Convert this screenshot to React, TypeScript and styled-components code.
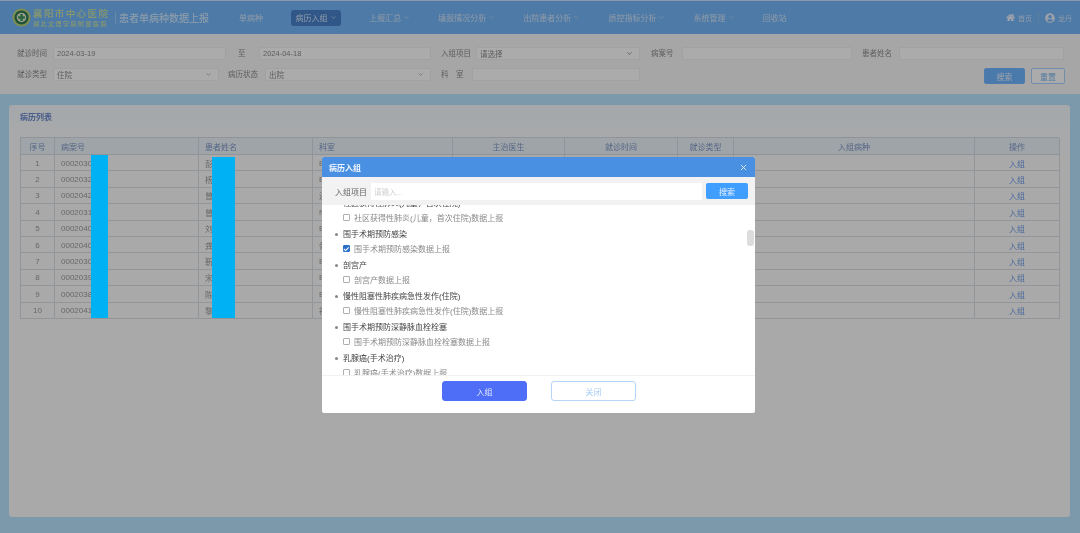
import styled, { createGlobalStyle } from "styled-components";
import { ChevronDown, X } from "lucide-react";
import { FaHome, FaUserCircle } from "react-icons/fa";

const GlobalStyle = createGlobalStyle`
  html, body {
    margin: 0;
    padding: 0;
    height: 533px;
    overflow: hidden;
    background: #bde6ff;
  }
  * {
    box-sizing: border-box;
  }
  body {
    font-family: "Liberation Sans", "Noto Sans CJK SC", sans-serif;
    font-size: 8px;
  }
`;

const Page = styled.div`
  position: relative;
  display: flex;
  flex-direction: column;
  width: 1080px;
  height: 533px;
  background: #b8e4ff;
  filter: blur(0.7px);
`;

const Header = styled.header`
  display: flex;
  align-items: center;
  flex: none;
  height: 34px;
  padding: 0 8px 0 12px;
  background: #74b6fa;
  border-top: 1px solid #cfe6ff;
`;

const LogoText = styled.div`
  display: flex;
  flex-direction: column;
  gap: 2px;
  width: 82px;
  margin-left: 2px;
  color: #cde4a0;
  font-family: "Noto Sans CJK SC", sans-serif;
  font-weight: 500;
  white-space: nowrap;
`;

const LogoTop = styled.span`
  font-size: 9.5px;
  line-height: 10px;
  letter-spacing: 1.4px;
`;

const LogoBottom = styled.span`
  font-size: 6px;
  line-height: 7px;
  letter-spacing: 1.5px;
`;

const Title = styled.div`
  margin-right: 30px;
  padding-left: 3px;
  border-left: 1px solid #9ccbf5;
  color: #dbeeff;
  font-family: "Noto Sans CJK SC", sans-serif;
  font-size: 10px;
  line-height: 12px;
  white-space: nowrap;
`;

const Nav = styled.nav`
  display: flex;
  align-items: center;
  flex: 1;
  gap: 28.1px;
`;

const NavItem = styled.div<{ $active?: boolean }>`
  display: flex;
  align-items: center;
  justify-content: center;
  gap: 2px;
  height: 16px;
  padding: 0 ${(p) => (p.$active ? 4.5 : 0)}px;
  border-radius: 3px;
  background: ${(p) => (p.$active ? "#4a82cc" : "transparent")};
  color: #d4e6fb;
  font-size: 8px;
  white-space: nowrap;
`;

const HeaderRight = styled.div`
  display: flex;
  align-items: center;
  gap: 3px;
  color: #cfe3fa;
  font-size: 7px;
`;

const Divider = styled.span`
  width: 1px;
  height: 11px;
  margin: 0 3px;
  background: #8fbdea;
`;

const FilterPanel = styled.section`
  display: flex;
  flex: none;
  flex-direction: column;
  gap: 8px;
  height: 60px;
  padding: 13px 15px 0 17px;
  background: #f8f8f8;
`;

const FilterRow = styled.div`
  display: flex;
  align-items: flex-start;
  height: 13px;
`;

const Label = styled.span<{ $width: number; $gap?: number }>`
  flex: none;
  width: ${(p) => p.$width}px;
  margin-left: ${(p) => p.$gap ?? 0}px;
  color: #8c8c8c;
  font-size: 7.5px;
  line-height: 13px;
  white-space: nowrap;
`;

const Field = styled.div<{ $width: number }>`
  display: flex;
  flex: none;
  align-items: center;
  justify-content: space-between;
  width: ${(p) => p.$width}px;
  height: 13px;
  padding: 0 6px 0 3px;
  border: 1px solid #f0f0f0;
  border-radius: 2px;
  background: #fff;
  color: #8c8c8c;
  font-size: 7.5px;
`;

const ButtonGroup = styled.div`
  display: flex;
  gap: 6px;
  margin-left: auto;
`;

const FilterButton = styled.div<{ $primary?: boolean }>`
  display: flex;
  align-items: center;
  justify-content: center;
  width: ${(p) => (p.$primary ? 41 : 34)}px;
  height: 16px;
  border-radius: 2px;
  border: 1px solid ${(p) => (p.$primary ? "#73b8ff" : "#a9d3ff")};
  background: ${(p) => (p.$primary ? "#6fb6ff" : "#fff")};
  color: ${(p) => (p.$primary ? "#e8f3ff" : "#7fb8f0")};
  font-size: 8px;
`;

const Content = styled.main`
  flex: 1;
  padding: 11px 10px 16px 9px;
`;

const Card = styled.section`
  height: 100%;
  padding: 7px 11px 0;
  border-radius: 3px;
  background: linear-gradient(#f6fbff 0, #fcfdfe 50px, #fdfdfd 100%);
`;

const CardTitle = styled.h2`
  margin: 0 0 13px;
  color: #6a88cc;
  font-size: 8px;
  font-weight: 700;
  line-height: 12px;
`;

const Table = styled.div`
  display: grid;
  grid-template-columns: 34px 144px 114px 140px 112px 113px 56px 241px 85px;
  width: 1039px;
  border-top: 1px solid #d5dde8;
  border-left: 1px solid #d5dde8;
`;

const HeadCell = styled.div<{ $left?: boolean }>`
  display: flex;
  align-items: center;
  justify-content: ${(p) => (p.$left ? "flex-start" : "center")};
  height: 17px;
  padding-left: ${(p) => (p.$left ? 6 : 0)}px;
  border-right: 1px solid #d5dde8;
  border-bottom: 1px solid #d5dde8;
  background: #eef5fb;
  color: #7d97c8;
  font-size: 8px;
`;

const Cell = styled.div<{ $left?: boolean; $link?: boolean }>`
  display: flex;
  align-items: center;
  justify-content: ${(p) => (p.$left ? "flex-start" : "center")};
  height: 16.4px;
  padding-top: 1px;
  padding-left: ${(p) => (p.$left ? 6 : 0)}px;
  border-right: 1px solid #dadfe6;
  border-bottom: 1px solid #dadfe6;
  color: ${(p) => (p.$link ? "#6f9be8" : "#9a9a9a")};
  font-size: 8px;
`;

const Backdrop = styled.div`
  position: absolute;
  inset: 0;
  z-index: 10;
  background: rgba(0, 0, 0, 0.33);
`;

const Redaction = styled.div<{ $left: number; $top: number; $width: number; $height: number }>`
  position: absolute;
  z-index: 11;
  left: ${(p) => p.$left}px;
  top: ${(p) => p.$top}px;
  width: ${(p) => p.$width}px;
  height: ${(p) => p.$height}px;
  background: #00b2f4;
`;

const Modal = styled.div`
  position: absolute;
  z-index: 20;
  left: 322px;
  top: 157px;
  display: flex;
  flex-direction: column;
  width: 433px;
  height: 256px;
  border-radius: 2px;
  overflow: hidden;
  background: #fff;
`;

const ModalHeader = styled.div`
  display: flex;
  align-items: center;
  justify-content: space-between;
  flex: none;
  height: 20px;
  padding: 0 7px;
  background: #4a90e2;
  color: #f2f7fd;
  font-size: 8px;
  font-weight: 700;
`;

const SearchBar = styled.div`
  display: flex;
  align-items: center;
  flex: none;
  height: 28px;
  padding: 0 7px 0 13px;
  background: #f2f2f2;
`;

const SearchLabel = styled.span`
  width: 36px;
  color: #666;
  font-size: 8px;
  white-space: nowrap;
`;

const SearchInput = styled.div`
  display: flex;
  align-items: center;
  flex: 1;
  height: 17px;
  padding-left: 3px;
  background: #fff;
  color: #d0d0d0;
  font-size: 7.5px;
`;

const SearchButton = styled.div`
  display: flex;
  align-items: center;
  justify-content: center;
  width: 42px;
  height: 16px;
  margin-left: 4px;
  border-radius: 2px;
  background: #409eff;
  color: #e6f2ff;
  font-size: 8px;
`;

const ListArea = styled.div`
  position: relative;
  flex: none;
  height: 171px;
  overflow: hidden;
  border-bottom: 1px solid #f1f1f1;
`;

const List = styled.ul`
  margin: -9px 0 0;
  padding: 0 0 0 13px;
  list-style: none;
`;

const Section = styled.li`
  display: flex;
  flex-direction: column;
`;

const SectionTitle = styled.div`
  position: relative;
  height: 15.5px;
  padding-left: 8px;
  color: #444;
  font-size: 8px;
  line-height: 15.5px;

  &::before {
    content: "";
    position: absolute;
    left: 0;
    top: 6px;
    width: 3px;
    height: 3px;
    border-radius: 50%;
    background: #888;
  }
`;

const Item = styled.label`
  display: flex;
  align-items: center;
  gap: 4px;
  height: 15.5px;
  padding: 0 0 3px 8px;
  color: #8a8a8a;
  font-size: 8px;
`;

const Checkbox = styled.input`
  position: relative;
  flex: none;
  width: 7px;
  height: 7px;
  margin: 0;
  appearance: none;
  border: 1px solid #b0b0b0;
  border-radius: 1px;
  background: #fff;

  &:checked {
    border-color: #2a6fc9;
    background: #2a6fc9;
  }

  &:checked::after {
    content: "";
    position: absolute;
    left: 1.2px;
    top: 0;
    width: 2px;
    height: 3.6px;
    border: solid #fff;
    border-width: 0 1px 1px 0;
    transform: rotate(45deg);
  }
`;

const ScrollThumb = styled.div`
  position: absolute;
  top: 25px;
  right: 1px;
  width: 7px;
  height: 16px;
  border-radius: 3px;
  background: #dcdcdc;
`;

const ModalFooter = styled.div`
  display: flex;
  align-items: flex-start;
  justify-content: center;
  gap: 24px;
  padding: 5px 0 0 1px;
`;

const ModalButton = styled.div<{ $primary?: boolean }>`
  display: flex;
  align-items: center;
  justify-content: center;
  width: 85px;
  height: 20px;
  border-radius: 3px;
  border: 1px solid ${(p) => (p.$primary ? "#4f6ef7" : "#b5d5f8")};
  background: ${(p) => (p.$primary ? "#4f6ef7" : "#fff")};
  color: ${(p) => (p.$primary ? "#e4e9ff" : "#a5cbf5")};
  font-size: 8px;
`;

const navItems = [
  { label: "单病种" },
  { label: "病历入组", menu: true, active: true },
  { label: "上报汇总", menu: true },
  { label: "填报情况分析", menu: true },
  { label: "出院患者分析", menu: true },
  { label: "质控指标分析", menu: true },
  { label: "系统管理", menu: true },
  { label: "回收站" },
];

const columns = ["序号", "病案号", "患者姓名", "科室", "主治医生", "就诊时间", "就诊类型", "入组病种", "操作"];
const leftColumns = ["病案号", "患者姓名", "科室"];

const rows = [
  ["0002030", "彭", "E"],
  ["0002032", "杨", "E"],
  ["0002042", "曾", "泌"],
  ["0002031", "曾", "N"],
  ["0002040", "刘", "E"],
  ["0002040", "龚", "骨"],
  ["0002030", "靳", "E"],
  ["0002039", "宋", "E"],
  ["0002038", "陈", "E"],
  ["0002041", "黎", "神"],
];

const sections = [
  { title: "社区获得性肺炎(儿童，首次住院)", item: "社区获得性肺炎(儿童，首次住院)数据上报" },
  { title: "围手术期预防感染", item: "围手术期预防感染数据上报", checked: true },
  { title: "剖宫产", item: "剖宫产数据上报" },
  { title: "慢性阻塞性肺疾病急性发作(住院)", item: "慢性阻塞性肺疾病急性发作(住院)数据上报" },
  { title: "围手术期预防深静脉血栓栓塞", item: "围手术期预防深静脉血栓栓塞数据上报" },
  { title: "乳腺癌(手术治疗)", item: "乳腺癌(手术治疗)数据上报" },
];

function LogoMark() {
  return (
    <svg width="19" height="19" viewBox="0 0 20 20">
      <circle cx="10" cy="10" r="9.6" fill="#b9d27a" />
      <circle cx="10" cy="10" r="7.4" fill="#2e7a52" />
      <circle cx="10" cy="10" r="5" fill="#e6eed2" />
      <path d="M8.7 6.4h2.6v2.3h2.3v2.6h-2.3v2.3H8.7v-2.3H6.4V8.7h2.3z" fill="#3f9460" />
    </svg>
  );
}

export default function App() {
  return (
    <>
      <GlobalStyle />
      <Page>
        <Header>
          <LogoMark />
          <LogoText>
            <LogoTop>襄阳市中心医院</LogoTop>
            <LogoBottom>湖北文理学院附属医院</LogoBottom>
          </LogoText>
          <Title>患者单病种数据上报</Title>
          <Nav>
            {navItems.map((item) => (
              <NavItem key={item.label} $active={item.active}>
                {item.label}
                {item.menu && <ChevronDown size={7} />}
              </NavItem>
            ))}
          </Nav>
          <HeaderRight>
            <FaHome size={9} color="#f2f7ff" />
            首页
            <Divider />
            <FaUserCircle size={10} color="#e6effa" />
            龙丹
          </HeaderRight>
        </Header>

        <FilterPanel>
          <FilterRow>
            <Label $width={36}>就诊时间</Label>
            <Field $width={173}>2024-03-19</Field>
            <Label $width={21} $gap={12}>至</Label>
            <Field $width={172}>2024-04-18</Field>
            <Label $width={35} $gap={10}>入组项目</Label>
            <Field $width={164}>
              请选择
              <ChevronDown size={7} strokeWidth={3} />
            </Field>
            <Label $width={31} $gap={11}>病案号</Label>
            <Field $width={170} />
            <Label $width={37} $gap={10}>患者姓名</Label>
            <Field $width={165} />
          </FilterRow>
          <FilterRow>
            <Label $width={36}>就诊类型</Label>
            <Field $width={166}>
              住院
              <ChevronDown size={7} />
            </Field>
            <Label $width={37} $gap={9}>病历状态</Label>
            <Field $width={166}>
              出院
              <ChevronDown size={7} />
            </Field>
            <Label $width={31} $gap={10}>科　室</Label>
            <Field $width={168} />
            <ButtonGroup>
              <FilterButton $primary>搜索</FilterButton>
              <FilterButton>重置</FilterButton>
            </ButtonGroup>
          </FilterRow>
        </FilterPanel>

        <Content>
          <Card>
            <CardTitle>病历列表</CardTitle>
            <Table>
              {columns.map((col) => (
                <HeadCell key={col} $left={leftColumns.includes(col)}>
                  {col}
                </HeadCell>
              ))}
              {rows.flatMap((row, i) => [
                <Cell key={`no-${i}`}>{i + 1}</Cell>,
                <Cell key={`id-${i}`} $left>{row[0]}</Cell>,
                <Cell key={`name-${i}`} $left>{row[1]}</Cell>,
                <Cell key={`dept-${i}`} $left>{row[2]}</Cell>,
                <Cell key={`doctor-${i}`} />,
                <Cell key={`time-${i}`} />,
                <Cell key={`type-${i}`} />,
                <Cell key={`disease-${i}`} />,
                <Cell key={`action-${i}`} $link>入组</Cell>,
              ])}
            </Table>
          </Card>
        </Content>

        <Backdrop />
        <Redaction $left={91} $top={155} $width={17} $height={163} />
        <Redaction $left={212} $top={157} $width={23} $height={161} />

        <Modal>
          <ModalHeader>
            病历入组
            <X size={9} strokeWidth={2.5} color="#dcebfb" />
          </ModalHeader>
          <SearchBar>
            <SearchLabel>入组项目</SearchLabel>
            <SearchInput>请输入...</SearchInput>
            <SearchButton>搜索</SearchButton>
          </SearchBar>
          <ListArea>
            <List>
              {sections.map((section) => (
                <Section key={section.title}>
                  <SectionTitle>{section.title}</SectionTitle>
                  <Item>
                    <Checkbox type="checkbox" defaultChecked={section.checked} />
                    {section.item}
                  </Item>
                </Section>
              ))}
            </List>
            <ScrollThumb />
          </ListArea>
          <ModalFooter>
            <ModalButton $primary>入组</ModalButton>
            <ModalButton>关闭</ModalButton>
          </ModalFooter>
        </Modal>
      </Page>
    </>
  );
}
